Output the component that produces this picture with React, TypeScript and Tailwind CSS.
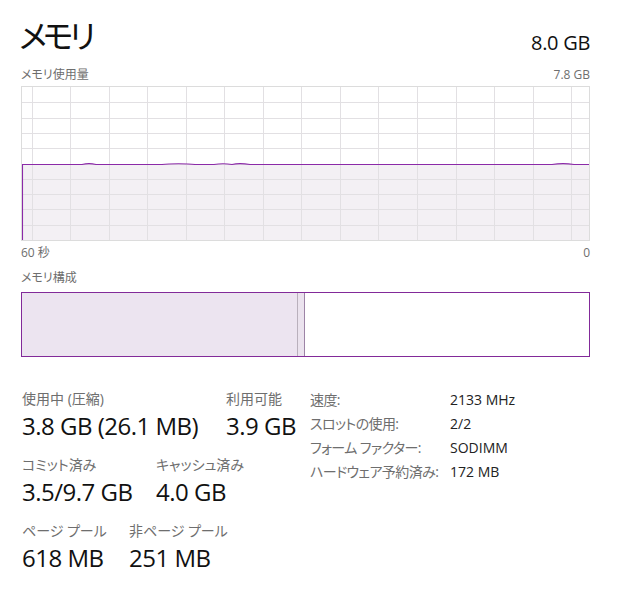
import React from "react";

const FONT = "font-['Open_Sans','Noto_Sans_CJK_JP',sans-serif] [font-feature-settings:'palt']";

function UsageGraph() {
  const W = 567;
  const H = 153;
  const vlines: number[] = [];
  for (let k = 0; k <= 14; k++) vlines.push(9.5 + 38.55 * k);
  const hlines: number[] = [];
  for (let k = 1; k <= 9; k++) hlines.push(Math.round(15.3 * k) + 0.5);
  const top =
    "M0.5,77.5 L60,77.5 C64,76.5 70,76.5 74,77.5 L140,77.5 C148,76.5 165,76.5 173,77.5 L192,77.5 C198,76.5 204,76.5 210,77.5 C214,76.5 222,76.5 228,77.5 L530,77.5 C536,76.5 546,76.5 552,77.5 L567,77.5";
  return (
    <div className="w-[569px] h-[155px] border border-[#dcdcdc] bg-white">
      <svg width={W} height={H} viewBox={`0 0 ${W} ${H}`} className="block">
        <path d={top + ` L567,${H} L0.5,${H} Z`} fill="#f3f0f4" />
        {vlines.map((x, i) => (
          <line key={"v" + i} x1={Math.round(x) + 0.5} y1={0} x2={Math.round(x) + 0.5} y2={H} stroke="#e2e0e3" strokeWidth={1} />
        ))}
        {hlines.map((y, i) => (
          <line key={"h" + i} x1={0} y1={y} x2={W} y2={y} stroke="#e2e0e3" strokeWidth={1} />
        ))}
        <path d={top} fill="none" stroke="#8b2aa8" strokeWidth={1.1} />
        <line x1={0.5} y1={77} x2={0.5} y2={H} stroke="#8b2aa8" strokeWidth={1.1} />
      </svg>
    </div>
  );
}

function Stat({ label, value, w }: { label: string; value: string; w: string }) {
  return (
    <div className={`flex flex-col ${w}`}>
      <div className="h-[20px] leading-[20px] text-[14px] text-[#6e6e6e] whitespace-nowrap">{label}</div>
      <div className="mt-[1px] h-[32px] leading-[32px] text-[24px] tracking-[-0.5px] text-[#111] whitespace-nowrap">{value}</div>
    </div>
  );
}

export default function App() {
  return (
    <div className={`w-[617px] h-[592px] bg-white pl-[21px] ${FONT}`}>
      <div className="w-[569px]">
        <div className="flex justify-between items-start h-[64px]">
          <div className="pt-[18px] -ml-[2px] text-[32px] leading-[36px] tracking-[-4px] text-[#111]">メモリ</div>
          <div className="pt-[30px] text-[20px] leading-[26px] tracking-[-0.3px] text-[#111]">8.0 GB</div>
        </div>
        <div className="flex justify-between items-center h-[22px] text-[12px] text-[#6e6e6e]">
          <span>メモリ使用量</span>
          <span>7.8 GB</span>
        </div>
        <UsageGraph />
        <div className="flex justify-between items-center h-[23px] text-[12px] text-[#6e6e6e]">
          <span>60 秒</span>
          <span>0</span>
        </div>
        <div className="flex items-center h-[28px] text-[12px] text-[#6e6e6e]">
          <span>メモリ構成</span>
        </div>
        <div className="flex h-[65px] border border-[#822a99] bg-white">
          <div className="w-[276px] h-full bg-[#ece4f0] border-r border-[#b9b0bc]" />
          <div className="w-[7px] h-full bg-[#ebe3ee] border-r border-[#9d84a6]" />
          <div className="flex-1 h-full bg-white" />
        </div>
        <div className="flex pt-[30px]">
          <div className="w-[289px] pt-[2px] pl-[1px] flex flex-col gap-[13px]">
            <div className="flex">
              <Stat label="使用中 (圧縮)" value="3.8 GB (26.1 MB)" w="w-[204px]" />
              <Stat label="利用可能" value="3.9 GB" w="w-[80px]" />
            </div>
            <div className="flex">
              <Stat label="コミット済み" value="3.5/9.7 GB" w="w-[134px]" />
              <Stat label="キャッシュ済み" value="4.0 GB" w="w-[120px]" />
            </div>
            <div className="flex">
              <Stat label="ページ プール" value="618 MB" w="w-[107px]" />
              <Stat label="非ページ プール" value="251 MB" w="w-[120px]" />
            </div>
          </div>
          <div className="flex flex-col text-[14px]">
            {[
              ["速度:", "2133 MHz"],
              ["スロットの使用:", "2/2"],
              ["フォーム ファクター:", "SODIMM"],
              ["ハードウェア予約済み:", "172 MB"],
            ].map(([l, v]) => (
              <div key={l} className="flex h-[24px] items-center">
                <span className="w-[140px] tracking-[-0.6px] text-[#6e6e6e] whitespace-nowrap">{l}</span>
                <span className="text-[#222] whitespace-nowrap">{v}</span>
              </div>
            ))}
          </div>
        </div>
      </div>
    </div>
  );
}
